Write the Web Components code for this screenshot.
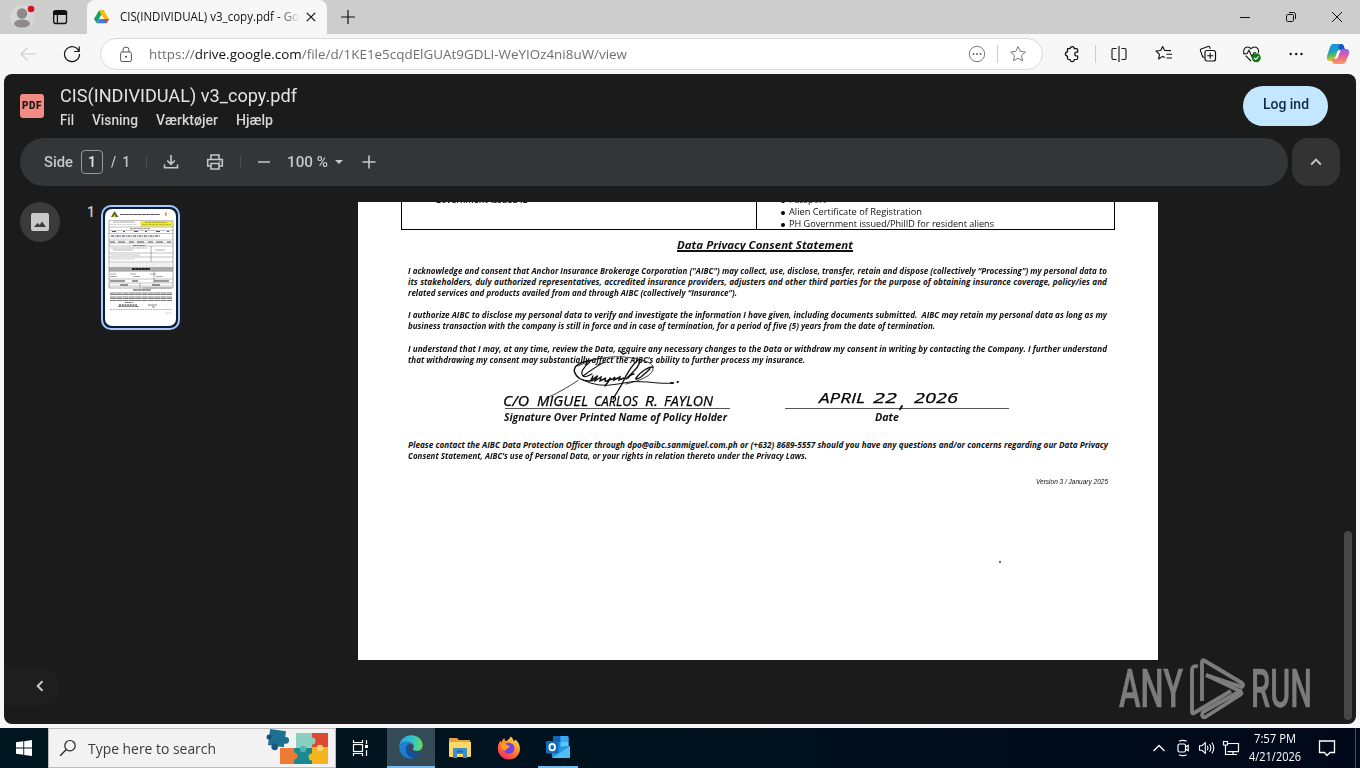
<!DOCTYPE html>
<html lang="da">
<head>
<meta charset="utf-8">
<title>CIS(INDIVIDUAL) v3_copy.pdf</title>
<style>
html,body{margin:0;height:100%;overflow:hidden;background:#f7f7f7}
</style>
</head>
<body>
<desk-screen></desk-screen>
<script>
class Base extends HTMLElement{
  connectedCallback(){
    if(this.shadowRoot)return;
    const r=this.attachShadow({mode:'open'});
    r.innerHTML='<style>:host{box-sizing:border-box}*{box-sizing:border-box}'+(this.css||'')+'</style>'+this.html();
    if(this.ready)this.ready(r);
  }
  html(){return '<slot></slot>'}
}
/* one line of text, scaled horizontally to a given width; with "k" the words are spread instead */
class FitText extends Base{
  get css(){return ':host{display:block;white-space:pre;flex:none}span{display:inline-block;transform-origin:0 50%;white-space:pre;text-decoration:var(--line,none);text-decoration-thickness:1.5px;text-underline-offset:1px;text-decoration-skip-ink:none}'}
  html(){return '<span><slot></slot></span>'}
  ready(r){
    const s=r.querySelector('span'),w=+this.getAttribute('w');
    this.style.width=w+'px';
    const n=s.getBoundingClientRect().width;
    let k=w/n;
    if(this.hasAttribute('k')){
      k=Math.min(k,+this.getAttribute('k'));
      const gaps=this.textContent.split(' ').length-1;
      s.style.wordSpacing=((w/k-n)/gaps)+'px';
    }
    s.style.transform='scaleX('+k+')';
  }
}
const L=(d,sw=1.1,x='')=>`<path d="${d}" fill="none" stroke="currentColor" stroke-width="${sw}" ${x}/>`;
const ICONS={
 profile:[30,26,`<circle cx="15" cy="13" r="12" fill="#d6d6d6"/><circle cx="15" cy="9.5" r="5.2" fill="#8d8a88"/><ellipse cx="15" cy="19.6" rx="8" ry="4" fill="#8d8a88"/><circle cx="24" cy="5" r="3.3" fill="#d70f1f"/>`],
 workspace:[16,16,`<rect x="1.7" y="1.7" width="12.8" height="12.8" rx="2" fill="none" stroke="#111" stroke-width="1.3"/><path d="M1.7 2.5h12.8v3H1.7zM5.4 5v9" fill="#111" stroke="#111" stroke-width="1.2"/>`],
 drive:[15,14,`<path d="M5 .5h5L5 9 2.5 13 0 9z" fill="#19a05b"/><path d="M5 .5h5l5 8.7h-5z" fill="#fbbc04"/><path d="M5 9h10l-2.5 4.3h-10z" fill="#3b7cf0"/><path d="M10 9h5l-2.5 4.3z" fill="#ea4335"/><path d="M7.5 5L10 9H5z" fill="#f7f7f7"/>`],
 close:[12,12,L('M1.8 1.8l8.4 8.4M10.2 1.8l-8.4 8.4',1.2)],
 plus:[14,14,L('M7 0v14M0 7h14',1.2)],
 min:[12,12,L('M1 6.5h10',1)],
 restore:[12,12,`<rect x="1.5" y="3.5" width="7" height="7" rx="1.2" fill="none" stroke="#111"/>`+L('M4 1.5h4.5a2 2 0 0 1 2 2V8',1)],
 winx:[12,12,L('M1 1l10 10M11 1L1 11',1)],
 back:[18,16,L('M17 8H2M8.5 1.5L2 8l6.5 6.5',1.1)],
 reload:[18,18,L('M15.8 6A7.5 7.5 0 1 0 16.5 9M16.2 1.5v5h-5',1.2)],
 lock:[14,17,`<rect x="1.6" y="6" width="10.8" height="9.5" rx="1.6" fill="none" stroke="#555"/><path d="M4 6V4a3 3 0 0 1 6 0v2" fill="none" stroke="#555"/><circle cx="7" cy="10.8" r="1" fill="#444"/>`],
 info:[18,18,`<circle cx="9" cy="9" r="7.7" fill="none" stroke="#777"/><g fill="#666"><circle cx="5.5" cy="9" r="1"/><circle cx="9" cy="9" r="1"/><circle cx="12.5" cy="9" r="1"/></g>`],
 star:[18,18,L('M9 1.6l2.2 4.8 5.2.6-3.9 3.6 1.1 5.2L9 13.2l-4.6 2.6 1.1-5.2L1.6 7l5.2-.6z',1,'stroke-linejoin="round"')],
 puzzle:[18,18,L('M4.500 3.700h2.600a2.100 2.100 0 0 1 4.200 0h2.200q1.200 0 1.200 1.200V7.100h-1a1.950 1.950 0 0 0 0 3.900h1v2.300q0 1.200-1.200 1.200h-2.200a2.100 2.100 0 0 1-4.200 0H5.700q-1.200 0-1.200-1.200v-2.200a2.100 2.100 0 0 1 0-4.200z',1.2,'stroke-linejoin="round"')],
 split:[18,18,L('M6.5 3.5H3.2q-1.2 0-1.2 1.2v8.6q0 1.2 1.2 1.2h3.3M11.5 3.5h3.3q1.2 0 1.2 1.2v8.6q0 1.2-1.2 1.2h-3.3M9 1v16',1.1)],
 favs:[18,18,L('M10 12.6L7.5 11.4 3.6 14l.9-4.6L1 6l4.700-.5L7.6 1.4l2 4.1 6.3.1M11.5 9.3H17M11.5 13H17',1.1,'stroke-linejoin="round"')],
 coll:[18,18,L('M5 12.5l-1.3-.7L1.4 5.6Q1 4.4 2.1 3.9L9 1.4q1.1-.4 1.6.6l.6 1.7',1.1)+`<rect x="6" y="5.5" width="10.5" height="10.5" rx="2" fill="none" stroke="#111" stroke-width="1.2"/>`+L('M11.2 7.8v6M8.2 10.8h6',1.1)],
 heart:[20,18,L('M2 8.7C.5 5.5 2.6 2 5.700 2 7.5 2 9 3.700 9 3.700S10.700 2 12.600 2c3 0 4.800 3.200 3.600 6M3.600 10.700L9 16M1 8.700h4l2-3.500 3 6.500 2-4h2',1.1)+`<circle cx="14.3" cy="12.8" r="4.5" fill="#107c10"/><path d="M12 12.8l1.700 1.700 3-3.200" fill="none" stroke="#fff" stroke-width="1.1"/>`],
 dots:[16,16,`<g fill="#111"><circle cx="2.7" cy="8" r="1.2"/><circle cx="8.2" cy="8" r="1.2"/><circle cx="13.5" cy="8" r="1.2"/></g>`],
 copilot:[24,22,`<defs><linearGradient id="a" x2=".2" y2="1"><stop stop-color="#168fe0"/><stop offset=".45" stop-color="#1b9ed2"/><stop offset=".7" stop-color="#57bb57"/><stop offset="1" stop-color="#f2c230"/></linearGradient><linearGradient id="b" x2="0" y2="1"><stop stop-color="#9a5be8"/><stop offset=".5" stop-color="#e8609c"/><stop offset="1" stop-color="#ff9b55"/></linearGradient></defs><path d="M7 1h8q2 0 2.700 2L19 7h-5q-2 0-2.800 2L9 15q-.8 3-3 3H4q-4 0-3-5L4 4q.8-3 3-3z" fill="url(#a)"/><path d="M15 1q2 0 2.800 2L19 7h-5L12 3z" fill="#1d4fc7"/><path d="M17 21H9q-2 0-2.700-2L5.500 16H9q2 0 2.800-2L14 8q.8-2 3-2h3q4 0 3 5l-3 7q-1 3-3 3z" fill="url(#b)"/><path d="M9.300 15.300l2.300-6.300q.8-2 2.900-2l-2.700 7.300q-.6 1.200-2.500 1z" fill="#fff"/>`],
 down:[18,18,L('M9 2v9M5.200 7.500L9 11.300l3.800-3.800M2.500 11.500v3.300h13v-3.300',1.6)],
 print:[18,18,L('M5 6V2h8v4M5 13H1.700V6.500h14.600V13H13M5 10.500h8V16H5z',1.6)+`<circle cx="13.600" cy="8.700" r=".8" fill="currentColor"/>`],
 minus:[14,14,L('M1 7h12',1.6)],
 caret:[10,6,`<path d="M1 1h8L5 5z" fill="currentColor"/>`],
 add:[14,14,L('M7 .5v13M.5 7h13',1.6)],
 up:[12,10,L('M1.200 7.500L6 2.700l4.800 4.800',1.9)],
 left:[10,12,L('M7.500 1.200L2.700 6l4.800 4.800',2)],
 image:[18,18,`<rect width="18" height="18" rx="2" fill="#c9c9c9"/><path d="M3 14l3.500-4 2.200 2 2.300-3.500 4 5.500z" fill="#3b3b3b"/>`],
 win:[16,16,`<path d="M0 2.300l7.300-1v6.300H0zM8.200 1.200L16 0v7.600H8.200zM0 8.500h7.300v6.300l-7.300-1zM8.200 8.500H16V16l-7.800-1.100z" fill="#fff"/>`],
 search:[18,18,`<circle cx="11" cy="6.700" r="5.200" fill="none" stroke="#222" stroke-width="1.200"/>`+L('M7.200 10.500L1.200 16.700',1.3)],
 taskview:[18,18,L('M2.500 1v2.500h9V1M2.500 17v-2.500h9V17M15.500 1v4M15.500 11v6',1.200)+`<rect x="2.500" y="5.500" width="9" height="7" fill="none" stroke="#fff" stroke-width="1.200"/><rect x="14" y="6" width="3" height="3" fill="#fff"/>`],
 edge:[24,24,`<defs><linearGradient id="e" x2="1"><stop stop-color="#2a9fe8"/><stop offset=".55" stop-color="#35c3cc"/><stop offset="1" stop-color="#63dd5a"/></linearGradient><linearGradient id="f" x2=".8" y2="1"><stop stop-color="#1b85d6"/><stop offset="1" stop-color="#1976cc"/></linearGradient></defs><path d="M.3 11C1 4.500 6 .3 12.200.3 19 .3 23.700 5 23.700 10.300c0 3.500-2.500 5.700-5.700 5.700-2.600 0-4.200-.9-4.200-1.900 0-.7 1-1.100 1-2.900C14.800 8.500 11.500 6.700 8 6.700 4.500 6.700 1.500 8.300.3 11z" fill="url(#e)"/><path d="M.3 11C1.500 8.300 4.500 6.700 8 6.700c3.300 0 6 1.400 6.700 3.600-.8-.8-2-1.200-3.200-1.200-3 0-4.600 2.600-4.600 5.400 0 4.500 4 8 8.500 8.500-1 .4-2.200.7-3.500.7C5 23.700-.4 18 .3 11z" fill="url(#f)"/><path d="M9.500 9.600c-1.700 1.100-2.600 2.900-2.600 4.900 0 4.500 4 8 8.500 8.500 3-.9 5.200-3 6.500-5.300.3-.6-.2-.8-.7-.5-1.400.8-3 1.100-4.800 1-4.500-.3-7.400-3.700-6.900-8.600z" fill="#124f9e"/>`],
 folder:[24,22,`<path d="M1 2q0-1 1-1h7l2 2h11v16H1z" fill="#e8a33a"/><path d="M1 5h22v14q0 1-1 1H2q-1 0-1-1z" fill="#fbd768"/><path d="M5 12q0-1 1-1h12q1 0 1 1v9h-4v-4H9v4H5z" fill="#3b8fd0"/><path d="M9 13.500h6v2H9z" fill="#2068a8"/>`],
 firefox:[24,24,`<defs><linearGradient id="g" x1=".8" x2=".2" y2="1"><stop stop-color="#ffe14b"/><stop offset=".45" stop-color="#ff8a2b"/><stop offset="1" stop-color="#f0255f"/></linearGradient></defs><path d="M13.500.5c2 1.300 3 3 3.200 4.600 1-.2 1.500-.5 1.800-1.500 3 2.500 4.700 6 4.400 9.900C22.500 19.500 18 23.500 12 23.500S.8 19 .8 12.500c0-3.700 1.200-6.200 2.900-8 .1 1 .4 1.600.8 2 .6-2 1.600-3.500 2.900-4.500 0 2 .6 3 2 3.300C10.500 4 12.800 3 13.500.5z" fill="url(#g)"/><path d="M8.500 7.500c4.500-2 9.500 1 9 5.500-.3 3-2.600 4.800-5.500 4.800-3.200 0-5.500-2.500-5.200-5.300l3 .2c1.300-.8 2.600-1.600 3-2.600-1.700 0-3.300-.8-4.300-2.600z" fill="#7542e5"/><path d="M4 8c2-1.500 4-.8 5.300.7 1.500.8 3 1 3.500 1.500-.5 1.200-2.300 1.700-3 2.400-.5.500-.3 2-1.500 2C5.500 14.500 4 11 4 8z" fill="#ff9a1f"/>`],
 outlook:[26,24,`<path d="M8 1h14q1.500 0 1.500 1.500V12H8z" fill="#1490df"/><path d="M8 1h7.500v6H8z" fill="#0f64b4"/><path d="M15.500 1H22q1.500 0 1.500 1.500V7h-8z" fill="#38a9ee"/><path d="M15.500 7h8v6h-8z" fill="#57c7f7"/><path d="M7 12l18-1v11q0 1-1 1H8q-1 0-1-1z" fill="#2a93dc"/><path d="M7 23l18-12v11q0 1-1 1z" fill="#4fbdf5"/><rect x="1" y="6" width="12.500" height="12.500" rx="1" fill="#0f6cbd"/><ellipse cx="7.200" cy="12.200" rx="2.800" ry="3.200" fill="none" stroke="#fff" stroke-width="1.800"/>`],
 trayup:[14,10,L('M1.500 8L7 2.500 12.500 8',1.300)],
 meet:[16,18,`<rect x="3" y="5" width="7.500" height="8" rx="1.500" fill="none" stroke="#fff" stroke-width="1.200"/>`+L('M10.500 8l2.700-1.700v5.400L10.500 10M4 2.300q3.800-2 7.600 0M4 15.700q3.800 2 7.600 0',1.200)],
 sound:[18,16,L('M1.500 5.700h2.500L7.300 2.700v10.600L4 10.300H1.500zM9.300 5.800q1.500 2.200 0 4.400M11.500 4.200q2.700 3.800 0 7.600M13.800 2.500q4 5.500 0 11',1.100)],
 net:[18,16,L('M5.500 3.500H16.500v8.200H5.500M11 11.700v2.500M7 14.500h8M1.500 1.500h4v3.500h-4zM3.500 5v9.500h4',1.200)],
 note:[18,18,L('M1.500 2h15v11.500h-4.500L9 16.500l-2.500-3H1.500z',1.300)],
 puz:[64,36,`<rect x="14" y="18" width="17" height="16" fill="#ee7b35"/><rect x="30" y="3" width="17" height="17" fill="#8bcfc0"/><rect x="46" y="3" width="16" height="15" fill="#dc4b30"/><rect x="28" y="18" width="18" height="16" fill="#19898f"/><rect x="46" y="17" width="16" height="17" fill="#f6b41e"/><circle cx="46" cy="11" r="3.500" fill="#8bcfc0"/><circle cx="28" cy="26" r="3.400" fill="#ee7b35"/><circle cx="46" cy="27" r="3.400" fill="#f6b41e"/><circle cx="54" cy="18" r="3.200" fill="#f9d071"/><circle cx="37" cy="19" r="3.200" fill="#53b3ad"/><g transform="rotate(8 10 8)"><rect x="3" y="0" width="16" height="16" fill="#1d6f93"/><circle cx="20" cy="9" r="3.300" fill="#1d6f93"/><circle cx="10" cy="17" r="3.300" fill="#18597d"/><circle cx="3" cy="8" r="2.500" fill="#14506f"/></g>`]
};
class UiIcon extends Base{
  get css(){return ':host{display:inline-flex;flex:none;align-items:center;justify-content:center}svg{display:block;overflow:visible}'}
  html(){const i=ICONS[this.getAttribute('name')];return `<svg width="${i[0]}" height="${i[1]}" viewBox="0 0 ${i[0]} ${i[1]}">${i[2]}</svg>`}
}
class TabStrip extends Base{
  get css(){return `:host{display:grid;height:34px;background:#cdcdcd;color:#111;align-items:center;justify-items:center;
   grid-template-columns:44px 32px 11px 240px 42px 1fr 46px 46px 46px;font:12px/34px "Open Sans",sans-serif}
   .tab{height:34px;width:240px;background:#f7f7f7;border-radius:8px 8px 0 0;display:flex;align-items:center;padding-left:7px}
   .t{margin-left:11px;width:179px;overflow:hidden;-webkit-mask-image:linear-gradient(90deg,#000 157px,transparent 181px)}
   .x{margin-left:6px}`}
  html(){return `<ui-icon name="profile"></ui-icon><ui-icon name="workspace"></ui-icon><i></i><div class="tab"><ui-icon name="drive"></ui-icon><div class="t"><fit-text w="179">CIS(INDIVIDUAL) v3_copy.pdf - Go</fit-text></div><ui-icon class="x" name="close"></ui-icon></div><ui-icon name="plus"></ui-icon><i></i><ui-icon name="min"></ui-icon><ui-icon name="restore"></ui-icon><ui-icon name="winx"></ui-icon>`}
}
class AddressBar extends Base{
  get css(){return `:host{display:grid;height:40px;background:#f7f7f7;align-items:center;justify-items:center;color:#111;
   grid-template-columns:12px 32px 56px 943px 5px 47px 1px 46px 44px 44px 44px 43px 42px;justify-content:start}
   .pill{height:32px;width:943px;background:#fff;border:1px solid #d9d9d9;border-radius:16px;display:flex;align-items:center;padding-left:18px}
   .u{margin-left:16px;font:13px/30px "Open Sans",sans-serif;color:#6f6f6f}.u b{font-weight:400;color:#111}
   .sp{flex:1}i.s{width:1px;height:18px;background:#ccc}.pill i.s{margin:0 11px 0 11px}.star{margin-right:15px;color:#777}.bk{color:#ccc}`}
  html(){return `<i></i><ui-icon class="bk" name="back"></ui-icon><ui-icon name="reload"></ui-icon><div class="pill"><ui-icon name="lock"></ui-icon><fit-text class="u" w="478">https://<b>drive.google.com</b>/file/d/1KE1e5cqdElGUAt9GDLI-WeYIOz4ni8uW/view</fit-text><span class="sp"></span><ui-icon name="info"></ui-icon><i class="s"></i><ui-icon class="star" name="star"></ui-icon></div><i></i><ui-icon name="puzzle"></ui-icon><i class="s"></i><ui-icon name="split"></ui-icon><ui-icon name="favs"></ui-icon><ui-icon name="coll"></ui-icon><ui-icon name="heart"></ui-icon><ui-icon name="dots"></ui-icon><ui-icon name="copilot"></ui-icon>`}
}
class ViewerHeader extends Base{
  get css(){return `:host{display:flex;height:64px;padding:11px 28px 0 16px;color:#e3e3e3;font-family:Roboto,sans-serif}
   .logo{display:grid;width:24px;height:24px;margin:9px 16px 0 0;background:#f28b82;border-radius:3px;place-items:center;font:900 10.500px/24px Roboto;color:#1b1b1b;letter-spacing:.6px}
   .title{font-size:18px;line-height:22px}.menu{display:flex;font-weight:500;font-size:14px;line-height:20px;margin-top:3px;color:#d6d6d6}
   .menu fit-text{margin-right:18px}.login{margin:1px 0 0 auto;width:85px;height:40px;border-radius:20px;background:#c2e7ff;color:#0b2a45;display:grid;place-items:center;font:500 14px/36px Roboto;padding-bottom:4px}`}
  html(){return `<div class="logo"><fit-text w="20">PDF</fit-text></div><div><fit-text class="title" w="237">CIS(INDIVIDUAL) v3_copy.pdf</fit-text><div class="menu"><fit-text w="14">Fil</fit-text><fit-text w="46">Visning</fit-text><fit-text w="62">Værktøjer</fit-text><fit-text w="37">Hjælp</fit-text></div></div><div class="login"><fit-text w="46">Log ind</fit-text></div>`}
}
class ViewerToolbar extends Base{
  get css(){return `:host{display:flex;gap:4px;height:48px;padding-left:16px;color:#c7c7c7;font:500 14px/48px Roboto,sans-serif}
   .bar{width:1268px;height:48px;border-radius:24px;background:#333537;display:grid;align-items:center;justify-items:center;justify-content:start;padding-left:24px;
   grid-template-columns:29px 8px 22px 8px 19px 16px 1px 48px 40px 5px 1px 46px 41px 22px 38px}
   .n{width:22px;height:24px;border:1px solid #999;border-radius:4px;text-align:center;line-height:23px;color:#e3e3e3}
   .s{width:1px;height:12px;background:#4b4d4f}.col{width:48px;height:48px;border-radius:16px;background:#333333;display:grid;place-items:center}`}
  html(){return `<div class="bar"><fit-text w="29">Side</fit-text><i></i><div class="n">1</div><i></i><fit-text w="19">/  1</fit-text><i></i><i class="s"></i><ui-icon name="down"></ui-icon><ui-icon name="print"></ui-icon><i></i><i class="s"></i><ui-icon name="minus"></ui-icon><fit-text w="41">100 %</fit-text><ui-icon name="caret"></ui-icon><ui-icon name="add"></ui-icon></div><div class="col"><ui-icon name="up"></ui-icon></div>`}
}
class PageThumb extends Base{
  get css(){return `:host{display:block;width:79px;height:125px;border:2px solid #a8c7fa;border-radius:10px;background:#0c1d38;padding:2px}svg{display:block;border-radius:7px;background:#fff}`}
  html(){
    const row=(y,a,b,c='#666',d='3 .4',h=.65)=>`<path d="M${a} ${y}H${b}" stroke="${c}" stroke-width="${h}" stroke-dasharray="${d}"/>`;
    let g='';
    g+='<path d="M6 8L9.500 2l4 6H9.800L9.300 7 8 8z" fill="#3f6a1f"/><path d="M8 8l1.500-3 1.500 3z" fill="#d9c22a"/><path d="M59.500 6.500l1.500-4.500 1 4.500z" fill="#d48a3c"/>';
    g+=row(5.500,15,55,'#445','4 .4',.9);
    g+='<rect x="35.500" y="12" width="32" height="5.500" fill="#efef20"/>';
    g+=row(13,8,30)+row(13.3,40,62,'#777a12')+row(15.700,37,66,'#999a20')+row(15.500,5,32,'#bbb');
    [11.500,18,21.500,24.500,31,34,37,44,48,53,62,70,74,77].forEach(y=>g+=`<path d="M4 ${y}h64" stroke="#999" stroke-width=".6"/>`);
    g+=row(19.700,25,45,'#555')+row(22.500,7,66,'#555','4 7 2 9',1)+row(27,6,55,'#334','3 .8 1 .7',1)+row(29,8,50,'#ccc');
    g+=row(33,5,66,'#444','5 3 7 4',.9)+row(36.500,28,40,'#444')+row(39,6,42,'#888')+row(41,8,60,'#888','20 22')+row(46,6,35,'#999')+row(50,6,30,'#aaa')+row(55,6,66,'#ccc')+row(57,6,66,'#ccc');
    g+='<rect x="4" y="58" width="64" height="4.500" fill="#aaa"/>'+row(60,27,45,'#222','3 .3',1.800)+row(65,5,60,'#777','6 14')+row(67.500,5,66,'#777','7 16')+row(72,5,66,'#333','15 7 6 16',1)+row(76,15,62,'#333','8 24',1)+row(79,38,66)+row(81,28,46,'#333','4 .3',1);
    g+='<path d="M4 11.500V79H68V11.500M46 37V53M49 62V74M35 74V79" fill="none" stroke="#777" stroke-width=".6"/>';
    [84,85.500,88,89.500,91.500].forEach(y=>g+=row(y,5,67,'#444','6 .3',.7));
    g+=row(93.500,20,28,'#333')+row(96,14,32,'#222','2 .7',1)+row(97.500,13,34,'#333')+row(96,43,52,'#333')+row(98,47,50,'#444')+row(100.500,5,67,'#888','2 .7',.600)+row(104,60,67,'#bbb');
    return `<svg width="71" height="117" viewBox="0 0 71 117">${g}</svg>`}
}
class PdfPage extends Base{
  get css(){return `:host{display:block;width:800px;height:458px;background:#fff;color:#111;overflow:hidden;font:8.2px/11px "Open Sans",sans-serif}
   .tbl{display:grid;grid-template-columns:355px 358px;height:28px;width:714px;margin-left:43px;border:1px solid #000;border-top:0;overflow:hidden;font-size:9.300px;line-height:12px}
   .c1{border-right:1px solid #000;padding-left:33px;font-weight:600}.c1 fit-text,.c2 ul{margin-top:-8px}
   ul{list-style:none;margin:0;padding:0 0 0 24px}li{display:flex;align-items:center;height:12px}
   li::before{content:"";width:4px;height:4px;border-radius:50%;background:#000;margin:1px 4px 0 0}
   h2{margin:7px 0 0 319px;font:italic 700 11px/16px "Open Sans"}h2 fit-text{--line:underline}
   .p{margin:12px 0 0 50px;font-style:italic;font-weight:700}.p+.p{margin-top:11px}.p+.p.c{margin-top:12px}
   .sig{display:flex;height:69px;margin-left:143px;gap:51px;position:relative}
   .f{width:229px;padding-top:28px;font:italic 700 10px/15px "Open Sans"}
   .h{display:flex;height:16px;font:italic 400 14px/16px "Open Sans",sans-serif;-webkit-text-stroke:.25px #000;border-bottom:1px solid #555;color:#000}
   .sig svg{position:absolute;left:65px;top:-20px;overflow:visible}
   .last{margin-top:5px}.v{margin:14px 0 0 678px;font:italic 7px/14px "Liberation Sans"}
   .dot{width:2px;height:2px;background:#333;border-radius:1px;margin:72px 0 0 641px}`}
  html(){return `<div class="tbl"><div class="c1"><fit-text w="94">Government-Issued ID</fit-text></div><div class="c2"><ul><li><fit-text w="37">Passport</fit-text></li><li><fit-text w="133">Alien Certificate of Registration</fit-text></li><li><fit-text w="205">PH Government issued/PhilID for resident aliens</fit-text></li></ul></div></div>
   <h2><fit-text w="176">Data Privacy Consent Statement</fit-text></h2>
   <div class="p"><fit-text w="699" k="1">I acknowledge and consent that Anchor Insurance Brokerage Corporation ("AIBC") may collect, use, disclose, transfer, retain and dispose (collectively “Processing”) my personal data to</fit-text><fit-text w="699" k="1">its stakeholders, duly authorized representatives, accredited insurance providers, adjusters and other third parties for the purpose of obtaining insurance coverage, policy/ies and</fit-text><fit-text w="329">related services and products availed from and through AIBC (collectively “Insurance”).</fit-text></div>
   <div class="p"><fit-text w="699" k="1">I authorize AIBC to disclose my personal data to verify and investigate the information I have given, including documents submitted.  AIBC may retain my personal data as long as my</fit-text><fit-text w="527">business transaction with the company is still in force and in case of termination, for a period of five (5) years from the date of termination.</fit-text></div>
   <div class="p c"><fit-text w="699" k="1">I understand that I may, at any time, review the Data, require any necessary changes to the Data or withdraw my consent in writing by contacting the Company. I further understand</fit-text><fit-text w="397">that withdrawing my consent may substantially affect the AIBC’s ability to further process my insurance.</fit-text></div>
   <div class="sig"><div class="f"><div class="h" style="margin-left:4px;width:225px"><fit-text w="26" style="margin-left:-2px">C/O</fit-text><fit-text w="51" style="margin-left:8px">MIGUEL</fit-text><fit-text w="44" style="margin-left:6px">CARLOS</fit-text><fit-text w="13" style="margin-left:7px">R.</fit-text><fit-text w="49" style="margin-left:6px">FAYLON</fit-text></div><fit-text w="223" style="margin-left:3px;margin-top:1px">Signature Over Printed Name of Policy Holder</fit-text></div>
   <div class="f" style="margin-left:4px"><div class="h" style="width:224px;line-height:8px;font-size:15px"><fit-text w="46" style="margin-left:34px">APRIL</fit-text><fit-text w="24" style="margin-left:8px">22</fit-text><fit-text w="5" style="margin-left:3px;line-height:16px;font-size:19px">,</fit-text><fit-text w="44" style="margin-left:9px">2026</fit-text></div><fit-text w="24" style="margin-left:90px;margin-top:1px">Date</fit-text></div>
   <svg width="120" height="66" viewBox="0 0 120 66" fill="none" stroke="#111" stroke-linecap="round"><path d="M54 6l3 3 3-1" stroke-width="1.500"/><path d="M26 15C15 17 7 20 8.500 27c2 6 8 9 14 9 6 0 8-2 9-5" stroke-width="1.400"/><path d="M39 17C33 19 20 29 17 31M24 17C17 22 14 28 17 31c3 2 6-1 9-2" stroke-width="1.200"/><path d="M12 21C30 12 50 10 66 13c13 2 22 5 21 11C86 31 73 36 60 39" stroke-width=".8"/><path d="M27 31l-2 4 5-3-1 4 6-4-1 4 6-3c-2 2-1 4 1 3l4-3-6 8M44 33c1 3 3 1 5-1l-1 3 6-3-1 3 5-2" stroke-width="1.400"/><path d="M72 15C64 22 60 30 56 39L47 54M72 15c4-1 1 6-4 11l-8 8M87 22c-5 0-13 5-17 11-1 2 2 1 5-1l9-8M62 33q3-4 6-4" stroke-width="1.400"/><path d="M17 35Q32 43 52 39q15-4 30-2 15 2 25 1" stroke-width="1"/><path d="M-16 51.500Q-4 46 12 35.500" stroke-width=".8"/><path d="M105 38h2M111.500 37h.5" stroke-width="1.800"/></svg></div>
   <div class="p last"><fit-text w="700" k="1">Please contact the AIBC Data Protection Officer through dpo@aibc.sanmiguel.com.ph or (+632) 8689-5557 should you have any questions and/or concerns regarding our Data Privacy</fit-text><fit-text w="399">Consent Statement, AIBC’s use of Personal Data, or your rights in relation thereto under the Privacy Laws.</fit-text></div>
   <fit-text class="v" w="72">Version 3 / January 2025</fit-text><div class="dot"></div>`}
}
class RunMark extends Base{
  get css(){return `:host{display:flex;position:absolute;left:1115px;top:584px;height:62px;align-items:center;gap:6px;color:#858585;opacity:.92;font:500 53px/62px Roboto,sans-serif}svg{display:block}fit-text{-webkit-text-stroke:.5px #858585}`}
  html(){return `<fit-text w="64">ANY</fit-text><svg width="56" height="62" viewBox="0 0 56 62" fill="none" stroke="currentColor" stroke-width="3.800" stroke-linejoin="round"><path d="M9 8.500Q3 7 3 12V54q0 2 2 1L42 33"/><path d="M13 43V4q0-3 3-1L53 25q2 2 0 4l-3-1L17 17"/><path d="M17 17L51 33q3 2 0 4L18 58q-4 3-5-1l1-3L53 32"/></svg><fit-text w="61">RUN</fit-text>`}
}
class DriveViewer extends Base{
  get css(){return `:host{display:flex;flex-direction:column;position:relative;height:650px;margin:0 4px;background:#1b1b1b;border-radius:8px;overflow:hidden}
   .body{display:grid;grid-template-columns:56px 35px 79px 184px 800px 186px 8px;padding-top:16px;height:538px;align-items:start}
   .left{display:flex;flex-direction:column;justify-content:space-between;height:508px}
   .img{width:40px;height:40px;margin-left:16px;border-radius:50%;background:#3b3b3b;display:grid;place-items:center}
   .fold{width:56px;height:40px;border-radius:0 20px 20px 0;background:#1e1e1e;display:flex;align-items:center;padding-left:31px;color:#c7c7c7;margin-bottom:4px}
   .num{font:500 14px/20px Roboto;color:#c7c7c7;text-align:right}
   page-thumb{margin:3px 0 0 6px}.sb{width:8px;height:189px;margin-top:329px;border-radius:4px;background:#474747}`}
  html(){return `<viewer-header></viewer-header><viewer-toolbar></viewer-toolbar><div class="body"><div class="left"><div class="img"><ui-icon name="image"></ui-icon></div><div class="fold"><ui-icon name="left"></ui-icon></div></div><div class="num">1</div><page-thumb></page-thumb><i></i><pdf-page></pdf-page><i></i><div class="sb"></div></div><run-mark></run-mark>`}
}
class TaskBar extends Base{
  get css(){return `:host{display:grid;height:40px;margin-top:4px;background:linear-gradient(90deg,#001722,#00111e 50%,#01081a);color:#fff;align-items:center;justify-items:center;
   grid-template-columns:48px 288px 48px 3px 48px 49px 49px 49px 1fr 24px 24px 24px 24px 64px 40px 13px;font:12px/18px "Open Sans",sans-serif}
   .s{width:288px;height:40px;background:#f2f2f2;border:1px solid #bbb;display:flex;align-items:center;padding-left:10px;color:#222}
   .s fit-text{font-size:15px;line-height:38px;margin-left:11px;color:#3b3b3b}.p{margin-left:50px}
   .a{background:#344a56;width:48px;height:40px;border-bottom:2px solid #76b9ed}.o{height:40px;width:40px;border-bottom:2px solid #76b9ed}
   .time{display:flex;flex-direction:column;align-items:center}.e{justify-self:end;width:1px;height:40px;margin-right:4px;background:#45505c}`}
  html(){return `<ui-icon name="win"></ui-icon><div class="s"><ui-icon name="search"></ui-icon><fit-text w="128">Type here to search</fit-text><ui-icon class="p" name="puz"></ui-icon></div><ui-icon name="taskview"></ui-icon><i></i><ui-icon class="a" name="edge"></ui-icon><ui-icon name="folder"></ui-icon><ui-icon name="firefox"></ui-icon><ui-icon class="o" name="outlook"></ui-icon><i></i><ui-icon name="trayup"></ui-icon><ui-icon name="meet"></ui-icon><ui-icon name="sound"></ui-icon><ui-icon name="net"></ui-icon><div class="time"><fit-text w="42">7:57 PM</fit-text><fit-text w="52">4/21/2026</fit-text></div><ui-icon name="note"></ui-icon><i class="e"></i>`}
}
class DeskScreen extends Base{
  get css(){return ':host{display:block;width:1360px;height:768px;overflow:hidden;background:#f7f7f7}'}
  html(){return '<tab-strip></tab-strip><address-bar></address-bar><drive-viewer></drive-viewer><task-bar></task-bar>'}
}
for(const [n,c] of Object.entries({'fit-text':FitText,'ui-icon':UiIcon,'tab-strip':TabStrip,'address-bar':AddressBar,'viewer-header':ViewerHeader,'viewer-toolbar':ViewerToolbar,'page-thumb':PageThumb,'pdf-page':PdfPage,'run-mark':RunMark,'drive-viewer':DriveViewer,'task-bar':TaskBar,'desk-screen':DeskScreen}))customElements.define(n,c);
</script>
</body>
</html>
